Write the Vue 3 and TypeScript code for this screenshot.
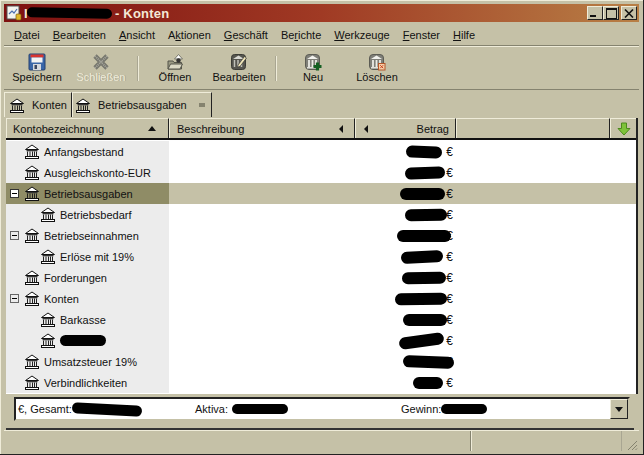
<script setup lang="ts">
interface Row { name: string; level: number; toggle?: boolean; sel?: boolean; blotW: number; blotTilt: number; over: number; hiddenName?: boolean }
const menus = [
  { k: 'D', r: 'atei' }, { k: 'B', r: 'earbeiten' }, { k: 'A', r: 'nsicht' },
  { p: 'A', k: 'k', r: 'tionen' }, { k: 'G', r: 'eschäft' }, { p: 'Be', k: 'r', r: 'ichte' },
  { k: 'W', r: 'erkzeuge' }, { k: 'F', r: 'enster' }, { k: 'H', r: 'ilfe' },
]
const rows: Row[] = [
  { name: 'Anfangsbestand', level: 0, blotW: 36, blotTilt: 2, over: 1 },
  { name: 'Ausgleichskonto-EUR', level: 0, blotW: 40, blotTilt: -2, over: -2 },
  { name: 'Betriebsausgaben', level: 0, toggle: true, sel: true, blotW: 45, blotTilt: 0, over: -2 },
  { name: 'Betriebsbedarf', level: 1, blotW: 42, blotTilt: -1, over: -4 },
  { name: 'Betriebseinnahmen', level: 0, toggle: true, blotW: 54, blotTilt: 0, over: -8 },
  { name: 'Erlöse mit 19%', level: 1, blotW: 42, blotTilt: -3, over: 0 },
  { name: 'Forderungen', level: 0, blotW: 44, blotTilt: -1, over: -3 },
  { name: 'Konten', level: 0, toggle: true, blotW: 52, blotTilt: -1, over: -4 },
  { name: 'Barkasse', level: 1, blotW: 44, blotTilt: 0, over: -4 },
  { name: '', level: 1, hiddenName: true, blotW: 45, blotTilt: -8, over: -1 },
  { name: 'Umsatzsteuer 19%', level: 0, blotW: 51, blotTilt: 2, over: -11 },
  { name: 'Verbindlichkeiten', level: 0, blotW: 30, blotTilt: 0, over: 0 },
]
</script>

<template>
  <div class="window">
    <svg width="0" height="0" class="defs">
      <symbol id="bank" viewBox="0 0 14 15">
        <path d="M7 1 L13.500 5.500 L0.500 5.500 Z" fill="#fff" stroke="#111" stroke-width="1" stroke-linejoin="round" />
        <rect x="1.500" y="6" width="11" height="1.300" fill="#333" />
        <path d="M2.500 7.500v4.500M5 7.500v4.500M7.500 7.500v4.500M9.500 7.500v4.500M11.500 7.500v4.500" stroke="#222" stroke-width="1" />
        <rect x="0.500" y="12.500" width="13" height="2" fill="#fff" stroke="#111" stroke-width="1" />
      </symbol>
      <symbol id="bankgrey" viewBox="0 0 18 18">
        <rect x="1.500" y="1.500" width="14" height="15" rx="3.500" fill="#7f7f78" stroke="#5c5c54" />
        <path d="M8.500 2.500 L14 6 H3 Z" fill="#f2f2ee" />
        <path d="M5 7v7M8.500 7v7M12 7v7" stroke="#ecece6" stroke-width="1.800" />
        <rect x="3" y="14" width="11" height="1.500" fill="#e0e0da" />
      </symbol>
    </svg>

    <header class="titlebar">
      <svg class="appicon" width="16" height="16" viewBox="0 0 16 16">
        <rect x="1" y="1" width="12" height="13" fill="#f4f4ee" stroke="#555" />
        <path d="M3 9l3-3 2 2 3-4" fill="none" stroke="#4a6fb0" stroke-width="1.200" />
        <rect x="10" y="9" width="5" height="6" rx="1" fill="#e2b82a" stroke="#7a5c10" stroke-width=".7" />
      </svg>
      <span class="title-i">I</span>
      <span class="blot title-blot"></span>
      <span class="title-text">- Konten</span>
      <span class="caps">
        <span class="cap"><i class="cap-min"></i></span>
        <span class="cap"><i class="cap-max"></i></span>
        <span class="cap cap-gap">
          <svg width="10" height="9" viewBox="0 0 10 9"><path d="M1 0.500l8 8M9 0.500l-8 8" stroke="#111" stroke-width="1.600" /></svg>
        </span>
      </span>
    </header>

    <nav class="menubar">
      <span v-for="m in menus" :key="m.r" class="menu">{{ m.p }}<u>{{ m.k }}</u>{{ m.r }}</span>
    </nav>

    <div class="toolbar">
      <div class="tool tool-save">
        <svg width="18" height="18" viewBox="0 0 18 18">
          <rect x="1" y="1" width="16" height="16" rx="1" fill="#3a66a8" stroke="#24406f" />
          <rect x="2.500" y="1.500" width="13" height="3" fill="#d9352f" />
          <rect x="3.500" y="4.500" width="11" height="5" fill="#f3f3f3" />
          <rect x="5" y="11" width="8" height="6" fill="#d5d8de" />
          <rect x="6.500" y="12" width="2.500" height="4" fill="#3a4660" />
        </svg>
        <span>Speichern</span>
      </div>
      <div class="tool tool-close disabled">
        <svg width="18" height="18" viewBox="0 0 18 18">
          <path d="M3 3l12 12M15 3L3 15" stroke="#77776e" stroke-width="4.600" />
          <path d="M3 3l12 12M15 3L3 15" stroke="#a9a99e" stroke-width="2" stroke-dasharray="1 1" />
        </svg>
        <span>Schließen</span>
      </div>
      <i class="tsep tsep1"></i>
      <div class="tool tool-open">
        <svg width="18" height="18" viewBox="0 0 18 18">
          <path d="M2 8h5l1 1.500h7.500V16H2z" fill="#9a9a84" stroke="#55554a" />
          <path d="M2 16l2.500-5h12l-2.500 5z" fill="#dcdac6" stroke="#55554a" />
          <path d="M8.500 6L12.500 1.500 16.500 6z" fill="#fff" stroke="#77776a" />
          <circle cx="12.500" cy="7.500" r="2.200" fill="#333" />
        </svg>
        <span>Öffnen</span>
      </div>
      <div class="tool tool-edit">
        <svg width="18" height="18" viewBox="0 0 18 18">
          <rect x="1.500" y="1.500" width="14" height="15" rx="3" fill="#55554e" stroke="#3c3c36" />
          <path d="M8.500 2.500 L14 6 H3 Z" fill="#d8d8d2" />
          <path d="M4.500 7v7M8 7v7M11.500 7v7" stroke="#c0c0b8" stroke-width="1.500" />
          <path d="M8 12L14.500 3.500 16.500 5 10 13.500 7.500 14z" fill="#f0e6b8" stroke="#333" stroke-width=".7" />
        </svg>
        <span>Bearbeiten</span>
      </div>
      <i class="tsep tsep2"></i>
      <div class="tool tool-new">
        <svg width="18" height="18" viewBox="0 0 18 18">
          <use href="#bankgrey" />
          <path d="M13.500 9.500v8M9.500 13.500h8" stroke="#145f22" stroke-width="3.200" />
        </svg>
        <span>Neu</span>
      </div>
      <div class="tool tool-del">
        <svg width="18" height="18" viewBox="0 0 18 18">
          <use href="#bankgrey" />
          <rect x="10.500" y="10.500" width="6.500" height="6.500" fill="#f5cfa8" stroke="#b5562a" />
          <path d="M12.200 12.200l3 3M15.200 12.200l-3 3" stroke="#c8401e" stroke-width="1" />
        </svg>
        <span>Löschen</span>
      </div>
    </div>

    <div class="tabs">
      <div class="tab tab-active">
        <svg width="14" height="15"><use href="#bank" /></svg>
        <span>Konten</span>
      </div>
      <div class="tab tab-two">
        <svg width="14" height="15"><use href="#bank" /></svg>
        <span>Betriebsausgaben</span>
        <i class="tab-close"></i>
      </div>
    </div>

    <section class="table">
      <div class="thead">
        <div class="th th-name"><span>Kontobezeichnung</span><i class="tri-up"></i></div>
        <div class="th th-desc"><span>Beschreibung</span><i class="tri-left"></i></div>
        <div class="th th-amt"><i class="tri-left"></i><span>Betrag</span></div>
        <div class="th th-fill"></div>
        <div class="th th-arrow">
          <svg width="14" height="14" viewBox="0 0 14 14">
            <path d="M4.500 1h5v5.500H13L7 13 1 6.500h3.500z" fill="#7ec23a" stroke="#4c8a1c" />
          </svg>
        </div>
      </div>
      <div class="tbody">
        <div v-for="(r, i) in rows" :key="i" class="row" :class="{ sel: r.sel }">
          <div class="cell-name" :class="{ indent: r.level === 1 }">
            <span v-if="r.toggle" class="toggle"></span>
            <svg class="bank" width="14" height="15"><use href="#bank" /></svg>
            <span v-if="r.hiddenName" class="blot name-blot"></span>
            <span v-else class="name">{{ r.name }}</span>
          </div>
          <div class="cell-desc"></div>
          <div class="cell-amt">
            <span class="blot amt-blot" :style="{ width: r.blotW + 'px', marginRight: r.over + 'px', transform: `rotate(${r.blotTilt}deg)` }"></span>
            <span class="euro">€</span>
          </div>
        </div>
      </div>
    </section>

    <div class="summary">
      <div class="sum-inner">
        <span class="sum-a">€, Gesamt:</span><span class="blot sb1"></span>
        <span class="sum-b">Aktiva:</span><span class="blot sb2"></span>
        <span class="sum-c">Gewinn:</span><span class="blot sb3"></span>
        <span class="combo"><i></i></span>
      </div>
    </div>

    <footer class="status">
      <div class="st st1"></div>
      <div class="st st2"></div>
      <svg class="grip" width="12" height="12" viewBox="0 0 12 12">
        <path d="M11 2L2 11M11 6L6 11M11 9.500L9.500 11" stroke="#85836f" stroke-width="1" />
      </svg>
    </footer>
  </div>
</template>

<style>
html, body { margin: 0; background: #c5c1a7; }
</style>

<style scoped>
.window {
  width: 644px; height: 455px; box-sizing: border-box; overflow: hidden;
  background: #c5c1a7; color: #111;
  font: 11px "Liberation Sans", Arial, sans-serif; white-space: nowrap;
  padding: 4px 4px 3px;
  display: flex; flex-direction: column;
  border-right: 1px solid #222; border-bottom: 1px solid #222;
  box-shadow: inset 1px 1px 0 #efecd9;
}
.defs { position: absolute; }
.blot { display: inline-block; background: #000; border-radius: 9px; }

.titlebar {
  height: 18px; flex: none; display: flex; align-items: center;
  background: linear-gradient(90deg, #7e1010 0%, #a03a24 50%, #b87f45 100%);
  color: #f4e9d6; font-size: 13px; font-weight: bold; padding-left: 2px;
}
.appicon { margin-right: 2px; }
.title-i { width: 3px; overflow: hidden; }
.title-blot { width: 85px; height: 10px; margin: 0 3px 0 0; transform: rotate(1deg); }
.title-text { letter-spacing: .2px; }
.caps { margin-left: auto; display: flex; margin-right: 2px; }
.cap {
  width: 16px; height: 14px; box-sizing: border-box; background: #c5c1a7;
  border: 1px solid; border-color: #efecd9 #222 #222 #efecd9;
  display: flex; align-items: center; justify-content: center; position: relative;
}
.cap-gap { margin-left: 2px; }
.cap-min { width: 6px; height: 2px; background: #111; align-self: flex-end; margin: 0 4px 2px 0; }
.cap-max { width: 9px; height: 8px; border: 1px solid #111; border-top-width: 2px; box-sizing: content-box; }

.menubar {
  height: 21px; padding-top: 1px; flex: none; display: flex; align-items: center; gap: 13px; padding-left: 10px;
  margin-top: 1px; border-bottom: 1px solid #85836f;
}
.menubar .menu u { text-underline-offset: 1px; }

.toolbar {
  height: 44px; flex: none; display: flex; align-items: stretch;
  border-top: 1px solid #efecd9; border-bottom: 1px solid #85836f; box-sizing: border-box;
}
.tool { display: flex; flex-direction: column; align-items: center; justify-content: flex-start; padding-top: 6px; gap: 0; flex: none; }
.tool span { line-height: 14px; margin-top: -1px; }
.tool svg { display: block; }
.tool-save { width: 60px; margin-left: 3px; }
.tool-close { width: 54px; margin-left: 7px; }
.disabled span { color: #efecd9; text-shadow: 1px 0 0 #a9a692; }
.tsep { width: 1px; background: #a9a692; border-right: 1px solid #efecd9; margin: 9px 0 8px; flex: none; }
.tsep1 { margin-left: 9px; }
.tsep2 { margin-left: 4px; }
.tool-open { width: 62px; margin-left: 5px; }
.tool-edit { width: 64px; margin-left: 1px; }
.tool-new { width: 46px; margin-left: 13px; }
.tool-del { width: 54px; margin-left: 14px; }

.tabs { height: 26px; flex: none; margin-top: 2px; display: flex; align-items: stretch; box-sizing: border-box; }
.tab {
  display: flex; align-items: center; box-sizing: border-box; height: 25px;
  border-top: 1px solid #efecd9; border-left: 1px solid #efecd9; border-right: 1px solid #222;
}
.tab-active { width: 68px; padding-left: 5px; gap: 8px; }
.tab-two { width: 140px; padding-left: 3px; gap: 8px; }
.tab-close { width: 6px; height: 4px; background: #85836f; margin-left: 4px; }

.table { margin: 0 1px 0 2px; flex: none; height: 276px; display: flex; flex-direction: column; background: #fff; border-right: 2px solid #222; }
.thead { height: 22px; flex: none; display: flex; border-bottom: 2px solid #111; background: #c5c1a7; box-sizing: border-box; }
.th {
  box-sizing: border-box; display: flex; align-items: center; height: 100%;
  border-top: 1px solid #efecd9; border-left: 1px solid #efecd9; border-right: 1px solid #222;
}
.th-name { width: 163px; padding: 0 6px; justify-content: space-between; }
.th-name .tri-up { margin-right: 6px; }
.th-desc { width: 186px; padding: 0 7px; justify-content: space-between; }
.th-desc .tri-left { margin-right: 4px; }
.th-amt { width: 101px; padding: 0 6px 0 8px; justify-content: space-between; }
.th-fill { flex: 1; }
.th-arrow { width: 26px; justify-content: center; border-right: 0; }
.tri-up { border: 4px solid transparent; border-bottom: 5px solid #111; border-top: 0; width: 0; height: 0; }
.tri-left { border: 4px solid transparent; border-right: 4px solid #111; border-left: 0; width: 0; height: 0; }

.tbody { flex: 1; padding-top: 1px; }
.row { height: 21px; display: flex; align-items: stretch; }
.cell-name {
  width: 163px; box-sizing: border-box; background: #ececec; position: relative;
  display: flex; align-items: center; padding-left: 19px; gap: 5px;
}
.cell-name.indent { padding-left: 35px; }
.cell-desc { width: 186px; }
.cell-amt { width: 98px; box-sizing: border-box; display: flex; align-items: center; justify-content: flex-end; gap: 1px; }
.row.sel { background: #c5c1a7; }
.row.sel .cell-name { background: #8f8c66; }
.toggle {
  position: absolute; left: 4px; top: 6px; width: 9px; height: 9px; box-sizing: border-box;
  border: 1px solid #666; background: linear-gradient(#000, #000) center / 5px 1px no-repeat #ececec;
}
.row.sel .toggle { background-color: #fff; border-color: #333; }
.bank { flex: none; }
.name-blot { width: 46px; height: 11px; }
.amt-blot { height: 12px; }
.euro { width: 9px; text-align: right; font-size: 12px; }

.summary { height: 33px; flex: none; margin: 3px 5px 0 2px; border-bottom: 2px solid #333; box-sizing: border-box; padding: 0 4px 0 8px; display: flex; }
.sum-inner {
  flex: 1; height: 24px; box-sizing: border-box; background: #fff; position: relative;
  border: 2px solid; border-color: #222 #c5c1a7 #c5c1a7 #222; display: flex; align-items: center; padding-left: 2px;
}
.sum-a { width: 54px; flex: none; }
.sb1 { width: 70px; height: 11px; transform: rotate(3deg); flex: none; }
.sum-b { margin-left: 53px; width: 37px; flex: none; }
.sb2 { width: 56px; height: 10px; flex: none; }
.sum-c { margin-left: 113px; width: 40px; flex: none; }
.sb3 { width: 46px; height: 10px; flex: none; }
.combo {
  position: absolute; right: 0; top: 0; bottom: 0; width: 18px; background: #c5c1a7; box-sizing: border-box;
  border: 1px solid; border-color: #efecd9 #222 #222 #efecd9; display: flex; align-items: center; justify-content: center;
}
.combo i { border: 4px solid transparent; border-top: 5px solid #111; border-bottom: 0; width: 0; height: 0; }

.status { flex: 1; display: flex; position: relative; border-top: 1px solid #efecd9; }
.st { box-sizing: border-box; height: 100%; }
.st1 { width: 467px; border-right: 1px solid #85836f; box-shadow: 1px 0 0 #efecd9; }
.st2 { width: 151px; border-right: 1px solid #a9a692; }
.grip { position: absolute; right: 1px; bottom: 0; }
</style>
